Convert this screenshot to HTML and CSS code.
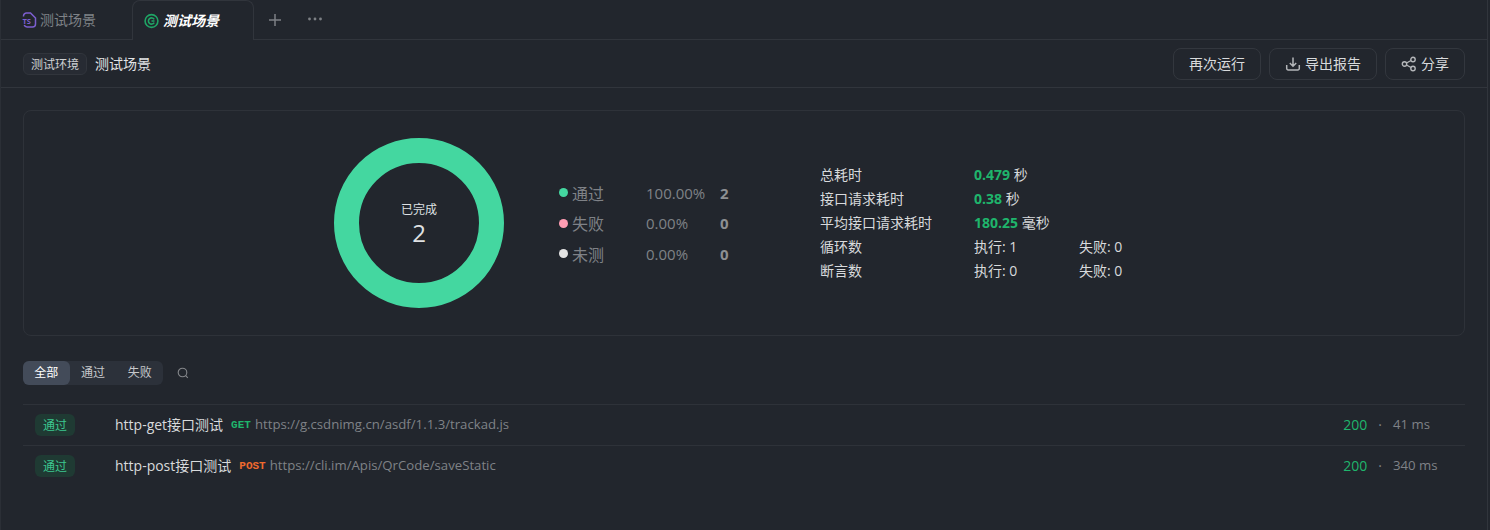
FILE: index.html
```html
<!DOCTYPE html>
<html lang="zh-CN">
<head>
  <meta charset="UTF-8">
  <title>测试场景</title>
  <link rel="stylesheet" href="styles.css">
</head>
<body>
  <div class="tabs">
    <div class="tab">
      <svg class="tab-icon" width="16" height="16" viewBox="0 0 16 16" fill="none" stroke="#7d5fd0" stroke-width="1.500">
        <path d="M2.500 4.500V4A3 3 0 0 1 5.500 1h4L14.500 6v6a3 3 0 0 1-3 3H6a3 3 0 0 1-2.800-2"/>
        <text x="1.500" y="11.500" class="tab-icon-text">TS</text>
      </svg>
      <span>测试场景</span>
    </div>
    <div class="tab active">
      <svg class="tab-icon" width="16" height="16" viewBox="0 0 16 16" fill="none" stroke="#1fa565" stroke-width="1.600">
        <circle cx="7.500" cy="8" r="6.400"/>
        <path d="M10.200 6.400A3.100 3.100 0 1 0 10.200 9.600M7.500 8h3"/>
      </svg>
      <span>测试场景</span>
    </div>
    <svg class="tab-action" width="14" height="14" viewBox="0 0 14 14" stroke="#7d8085" stroke-width="1.500">
      <path d="M7 1v12M1 7h12"/>
    </svg>
    <svg class="tab-more" width="16" height="4" viewBox="0 0 16 4" fill="#7d8085">
      <circle cx="2.500" cy="2" r="1.400"/>
      <circle cx="8" cy="2" r="1.400"/>
      <circle cx="13.500" cy="2" r="1.400"/>
    </svg>
  </div>

  <div class="toolbar">
    <span class="env-tag">测试环境</span>
    <span class="scene-name">测试场景</span>
    <div class="toolbar-btns">
      <button class="btn btn-run"><span>再次运行</span></button>
      <button class="btn btn-export">
        <svg width="16" height="16" viewBox="0 0 16 16" fill="none" stroke="#b4b6b9" stroke-width="1.500">
          <path d="M8 1.500v8.500M4.800 7 8 10.200 11.200 7M1.700 9v3.500a1.500 1.500 0 0 0 1.500 1.500h9.600a1.500 1.500 0 0 0 1.500-1.500V9"/>
        </svg>
        <span>导出报告</span>
      </button>
      <button class="btn btn-share">
        <svg width="16" height="16" viewBox="0 0 16 16" fill="none" stroke="#b4b6b9" stroke-width="1.400">
          <circle cx="3.500" cy="8" r="2.200"/>
          <circle cx="12" cy="3.500" r="2.200"/>
          <circle cx="12" cy="12.500" r="2.200"/>
          <path d="M5.500 7 10 4.500M5.500 9 10 11.500"/>
        </svg>
        <span>分享</span>
      </button>
    </div>
  </div>

  <div class="content">
    <div class="summary">
      <div class="donut">
        <div class="donut-label">已完成</div>
        <div class="donut-num">2</div>
      </div>

      <div class="legend">
        <div class="legend-row">
          <i class="dot dot-pass"></i><span class="legend-name">通过</span>
          <span class="legend-pct">100.00%</span><b class="legend-count">2</b>
        </div>
        <div class="legend-row">
          <i class="dot dot-fail"></i><span class="legend-name">失败</span>
          <span class="legend-pct">0.00%</span><b class="legend-count">0</b>
        </div>
        <div class="legend-row">
          <i class="dot dot-none"></i><span class="legend-name">未测</span>
          <span class="legend-pct">0.00%</span><b class="legend-count">0</b>
        </div>
      </div>

      <div class="stats">
        <div class="stat-row"><span class="stat-name">总耗时</span><span><b>0.479</b> 秒</span></div>
        <div class="stat-row"><span class="stat-name">接口请求耗时</span><span><b>0.38</b> 秒</span></div>
        <div class="stat-row"><span class="stat-name">平均接口请求耗时</span><span><b>180.25</b> 毫秒</span></div>
        <div class="stat-row"><span class="stat-name">循环数</span><span class="stat-val">执行: 1</span><span>失败: 0</span></div>
        <div class="stat-row"><span class="stat-name">断言数</span><span class="stat-val">执行: 0</span><span>失败: 0</span></div>
      </div>
    </div>

    <div class="filters">
      <div class="segment">
        <span class="seg-item selected">全部</span>
        <span class="seg-item">通过</span>
        <span class="seg-item">失败</span>
      </div>
      <svg class="search-icon" width="12" height="12" viewBox="0 0 12 12" fill="none" stroke="#85878b" stroke-width="1.100">
        <circle cx="5.500" cy="5.500" r="4.300"/>
        <path d="M8.700 8.700 10.800 10.800"/>
      </svg>
    </div>

    <div class="results">
      <div class="result-row">
        <span class="pass-tag">通过</span>
        <span class="req-name">http-get接口测试</span>
        <span class="method method-get">GET</span>
        <span class="req-url">https://g.csdnimg.cn/asdf/1.1.3/trackad.js</span>
        <span class="status">200</span>
        <span class="sep">·</span>
        <span class="time">41 ms</span>
      </div>
      <div class="result-row">
        <span class="pass-tag">通过</span>
        <span class="req-name">http-post接口测试</span>
        <span class="method method-post">POST</span>
        <span class="req-url">https://cli.im/Apis/QrCode/saveStatic</span>
        <span class="status">200</span>
        <span class="sep">·</span>
        <span class="time">340 ms</span>
      </div>
    </div>
  </div>
</body>
</html>
```

FILE: styles.css
```css
* {
  box-sizing: border-box;
}

html {
  background: #22262d;
}

body {
  margin: 0;
  width: 1488px;
  height: 530px;
  overflow: hidden;
  background: #22262d;
  border-left: 1px solid #2b2f36;
  border-right: 1px solid #31353c;
  color: #d8dadc;
  font-family: "Open Sans", "Noto Sans CJK SC", sans-serif;
  font-size: 14px;
}

.tabs {
  display: flex;
  align-items: center;
  height: 40px;
  border-bottom: 1px solid #31353c;
}

.tab {
  display: flex;
  align-items: center;
  gap: 3px;
  width: 131px;
  height: 40px;
  padding-left: 20px;
  color: #7f8287;
}

.tab span {
  margin-bottom: 2px;
}

.tab.active {
  width: 122px;
  padding-left: 11px;
  margin-bottom: -1px;
  background: #22262d;
  border: 1px solid #31353c;
  border-bottom: none;
  border-radius: 8px 8px 0 0;
  color: #fff;
  font-style: italic;
  font-weight: 700;
}

.tab-icon {
  flex: none;
}

.tab-icon-text {
  fill: #7d5fd0;
  stroke: none;
  font-size: 7.500px;
  font-weight: 700;
  font-style: normal;
}

.tab-action {
  margin-left: 14px;
}

.tab-more {
  margin-left: 25px;
  margin-bottom: 2px;
}

.toolbar {
  display: flex;
  align-items: center;
  height: 48px;
  padding: 0 22px;
  border-bottom: 1px solid #31353c;
}

.env-tag {
  height: 22px;
  padding: 0 7px;
  margin-right: 8px;
  line-height: 22px;
  font-size: 12px;
  color: #cfd1d4;
  background: #272b33;
  border: 1px solid #31353c;
  border-radius: 6px;
}

.scene-name {
  margin-bottom: 2px;
  color: #e2e4e6;
}

.toolbar-btns {
  display: flex;
  gap: 8px;
  margin-left: auto;
}

.btn {
  display: flex;
  align-items: center;
  justify-content: center;
  gap: 4px;
  height: 32px;
  padding: 0;
  background: transparent;
  border: 1px solid #33373e;
  border-radius: 8px;
  color: #d8dadc;
  font-family: inherit;
  font-size: 14px;
}

.btn span {
  margin-bottom: 2px;
}

.btn-run {
  width: 88px;
}

.btn-export {
  width: 108px;
}

.btn-share {
  width: 80px;
}

.content {
  padding: 22px 22px 0;
}

.summary {
  display: flex;
  align-items: center;
  justify-content: center;
  height: 226px;
  border: 1px solid #2e3239;
  border-radius: 8px;
}

.donut {
  display: flex;
  flex-direction: column;
  align-items: center;
  justify-content: center;
  flex: none;
  width: 170px;
  height: 170px;
  border: 25px solid #44d7a0;
  border-radius: 50%;
  color: #dfe1e3;
}

.donut-label {
  margin-top: 3px;
  font-size: 12px;
  line-height: 16px;
}

.donut-num {
  font-size: 24px;
  line-height: 30px;
}

.legend {
  width: 261px;
  margin-left: 55px;
}

.legend-row {
  display: flex;
  align-items: center;
  height: 30.500px;
  font-size: 16px;
  color: #7f8287;
}

.dot {
  width: 9px;
  height: 9px;
  border-radius: 50%;
  margin-right: 4px;
}

.dot-pass {
  background: #44d7a0;
}

.dot-fail {
  background: #ff9db3;
}

.dot-none {
  background: #e3e3e3;
}

.legend-name {
  width: 74px;
}

.legend-pct {
  width: 74px;
  font-size: 15px;
}

.legend-count {
  font-size: 15px;
  color: #8d8f92;
}

.stats {
  width: 334px;
}

.stat-row {
  display: flex;
  height: 24px;
  line-height: 24px;
}

.stat-name {
  width: 154px;
}

.stat-val {
  width: 105px;
}

.stat-row b {
  color: #1fb56c;
}

.filters {
  display: flex;
  align-items: center;
  margin-top: 25px;
}

.segment {
  display: flex;
  width: 140px;
  height: 24px;
  background: #2c313a;
  border-radius: 6px;
  font-size: 12px;
  line-height: 24px;
  color: #c6c8cb;
}

.seg-item {
  flex: 1;
  text-align: center;
}

.seg-item.selected {
  background: #434b59;
  border-radius: 6px;
  color: #fff;
}

.search-icon {
  margin-left: 14px;
}

.results {
  margin-top: 19px;
}

.result-row {
  display: flex;
  align-items: center;
  height: 41px;
  padding: 0 27px 0 12px;
  border-top: 1px solid #2e3239;
  white-space: nowrap;
}

.pass-tag {
  width: 40px;
  height: 22px;
  margin-right: 40px;
  line-height: 24px;
  text-align: center;
  font-size: 12px;
  color: #3cc78f;
  background: #1f3a33;
  border-radius: 6px;
}

.req-name,
.req-url,
.status,
.sep,
.time {
  margin-bottom: 2px;
}

.req-name {
  color: #d8dadc;
}

.method {
  margin: 0 4px 0 8px;
  font-family: "Liberation Mono", monospace;
  font-size: 11px;
  font-weight: 700;
}

.method-get {
  color: #1fb56c;
}

.method-post {
  color: #ef6a2e;
}

.req-url {
  font-size: 13.200px;
  color: #7f8287;
}

.status {
  margin-left: auto;
  color: #1fb56c;
}

.sep {
  margin-left: 11px;
  margin-right: 11px;
  color: #7f8287;
}

.time {
  width: 45px;
  font-size: 13.200px;
  color: #7f8287;
}
```
